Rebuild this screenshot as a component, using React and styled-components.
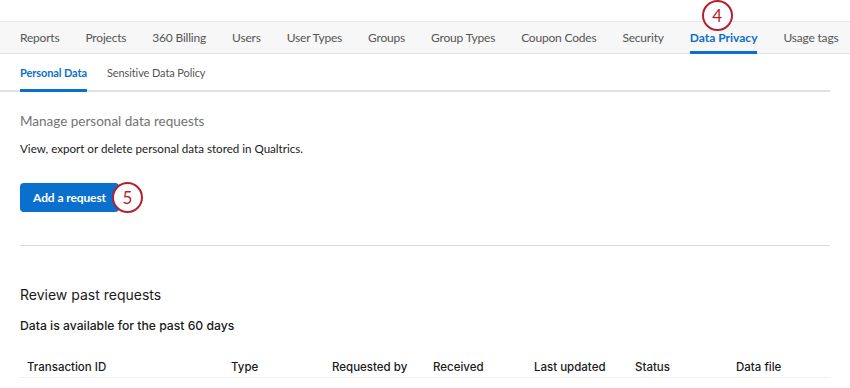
import React from 'react'
import styled, { createGlobalStyle } from 'styled-components'

const GlobalStyle = createGlobalStyle`
  html, body {
    margin: 0;
    padding: 0;
    background: #fff;
  }
  body {
    font-family: Lato, "Liberation Sans", sans-serif;
    color: #1a1a1a;
  }
`

const Page = styled.div`
  width: 850px;
  height: 388px;
  overflow: hidden;
  background: #fff;
`

const TitleStrip = styled.div`
  height: 21px;
  overflow: hidden;
  padding-left: 20px;
`

const PageTitle = styled.div`
  font-size: 18px;
  font-weight: 700;
  line-height: 18px;
  color: #ccd7e4;
  margin-top: -16px;
`

const NavBar = styled.nav`
  height: 31px;
  display: flex;
  align-items: stretch;
  gap: 26px;
  padding-left: 20px;
  background: #f7f7f7;
  border-top: 1px solid #e8e8e8;
  border-bottom: 1px solid #e3e3e3;
`

const NavItem = styled.div`
  position: relative;
  display: flex;
  align-items: center;
  font-size: 12px;
  letter-spacing: ${({ $active }) => ($active ? '0' : '-0.2px')};
  font-weight: ${({ $active }) => ($active ? 700 : 400)};
  color: ${({ $active }) => ($active ? '#0b6fce' : '#555')};
  white-space: nowrap;
  border-bottom: 3px solid ${({ $active }) => ($active ? '#0b6fce' : 'transparent')};
  box-sizing: border-box;
  padding-top: 2px;
  margin-bottom: -1px;
`

const Marker = styled.div`
  position: absolute;
  z-index: 2;
  width: 27px;
  height: 27px;
  border: 2px solid #b51f2e;
  border-radius: 50%;
  background: #fff;
  color: #b51f2e;
  font-family: Lato, "Liberation Sans", sans-serif;
  font-size: 17px;
  font-weight: 400;
  letter-spacing: 0;
  display: flex;
  align-items: center;
  justify-content: center;
  box-sizing: content-box;
`

const TabMarker = styled(Marker)`
  top: -22px;
  left: 12px;
`

const SubTabs = styled.div`
  width: 830px;
  height: 38px;
  display: flex;
  align-items: stretch;
  gap: 20px;
  padding-left: 20px;
  box-sizing: border-box;
  border-bottom: 2px solid #e2e2e2;
`

const SubTab = styled.div`
  display: flex;
  align-items: center;
  font-size: 11px;
  letter-spacing: -0.1px;
  font-weight: ${({ $active }) => ($active ? 700 : 400)};
  color: ${({ $active }) => ($active ? '#0b6fce' : '#555')};
  border-bottom: 3px solid ${({ $active }) => ($active ? '#0b6fce' : 'transparent')};
  margin-bottom: -2px;
  padding-top: 2px;
`

const Content = styled.section`
  width: 810px;
  margin-left: 20px;
  font-family: Inter, "Liberation Sans", sans-serif;
`

const Heading = styled.div`
  margin-top: 19px;
  font-family: Lato, "Liberation Sans", sans-serif;
  font-size: 13.5px;
  color: #737373;
  line-height: 20px;
`

const Description = styled.div`
  margin-top: 10px;
  font-family: Lato, "Liberation Sans", sans-serif;
  font-size: 11.6px;
  color: #1a1a1a;
  line-height: 16px;
`

const ButtonRow = styled.div`
  margin-top: 26px;
  display: flex;
`

const ButtonWrap = styled.div`
  position: relative;
`

const PrimaryButton = styled.button`
  width: 99px;
  height: 29px;
  border: none;
  border-radius: 4px;
  background: #0b6fce;
  color: #fff;
  font-family: Lato, "Liberation Sans", sans-serif;
  font-size: 12px;
  font-weight: 700;
  letter-spacing: -0.1px;
  padding: 0;
  cursor: pointer;
`

const ButtonMarker = styled(Marker)`
  top: -1px;
  left: 92px;
`

const Divider = styled.hr`
  margin: 33px 0 0;
  border: none;
  border-top: 1px solid #dcdcdc;
`

const SectionTitle = styled.h2`
  margin: 39px 0 0;
  font-size: 14px;
  font-weight: 400;
  color: #1a1a1a;
  line-height: 20px;
`

const SectionNote = styled.div`
  margin-top: 12px;
  font-size: 12.2px;
  font-weight: 500;
  color: #1a1a1a;
  line-height: 18px;
`

const TableHead = styled.div`
  margin-top: 22px;
  display: grid;
  grid-template-columns: 204px 101px 101px 101px 101px 101px auto;
  padding-left: 7px;
  height: 20px;
  align-items: center;
  border-bottom: 1px solid #f0f0f0;
`

const HeadCell = styled.div`
  font-size: 11.5px;
  font-weight: 500;
  color: #1a1a1a;
  white-space: nowrap;
`

const navItems = [
  'Reports',
  'Projects',
  '360 Billing',
  'Users',
  'User Types',
  'Groups',
  'Group Types',
  'Coupon Codes',
  'Security',
  'Data Privacy',
  'Usage tags'
]

const columns = ['Transaction ID', 'Type', 'Requested by', 'Received', 'Last updated', 'Status', 'Data file']

const App = () => {
  return (
    <Page>
      <GlobalStyle />
      <TitleStrip>
        <PageTitle>Admin</PageTitle>
      </TitleStrip>
      <NavBar>
        {navItems.map(item => (
          <NavItem key={item} $active={item === 'Data Privacy'}>
            {item}
            {item === 'Data Privacy' && <TabMarker>4</TabMarker>}
          </NavItem>
        ))}
      </NavBar>
      <SubTabs>
        <SubTab $active>Personal Data</SubTab>
        <SubTab>Sensitive Data Policy</SubTab>
      </SubTabs>
      <Content>
        <Heading>Manage personal data requests</Heading>
        <Description>View, export or delete personal data stored in Qualtrics.</Description>
        <ButtonRow>
          <ButtonWrap>
            <PrimaryButton>Add a request</PrimaryButton>
            <ButtonMarker>5</ButtonMarker>
          </ButtonWrap>
        </ButtonRow>
        <Divider />
        <SectionTitle>Review past requests</SectionTitle>
        <SectionNote>Data is available for the past 60 days</SectionNote>
        <TableHead>
          {columns.map(col => (
            <HeadCell key={col}>{col}</HeadCell>
          ))}
        </TableHead>
      </Content>
    </Page>
  )
}

export default App
